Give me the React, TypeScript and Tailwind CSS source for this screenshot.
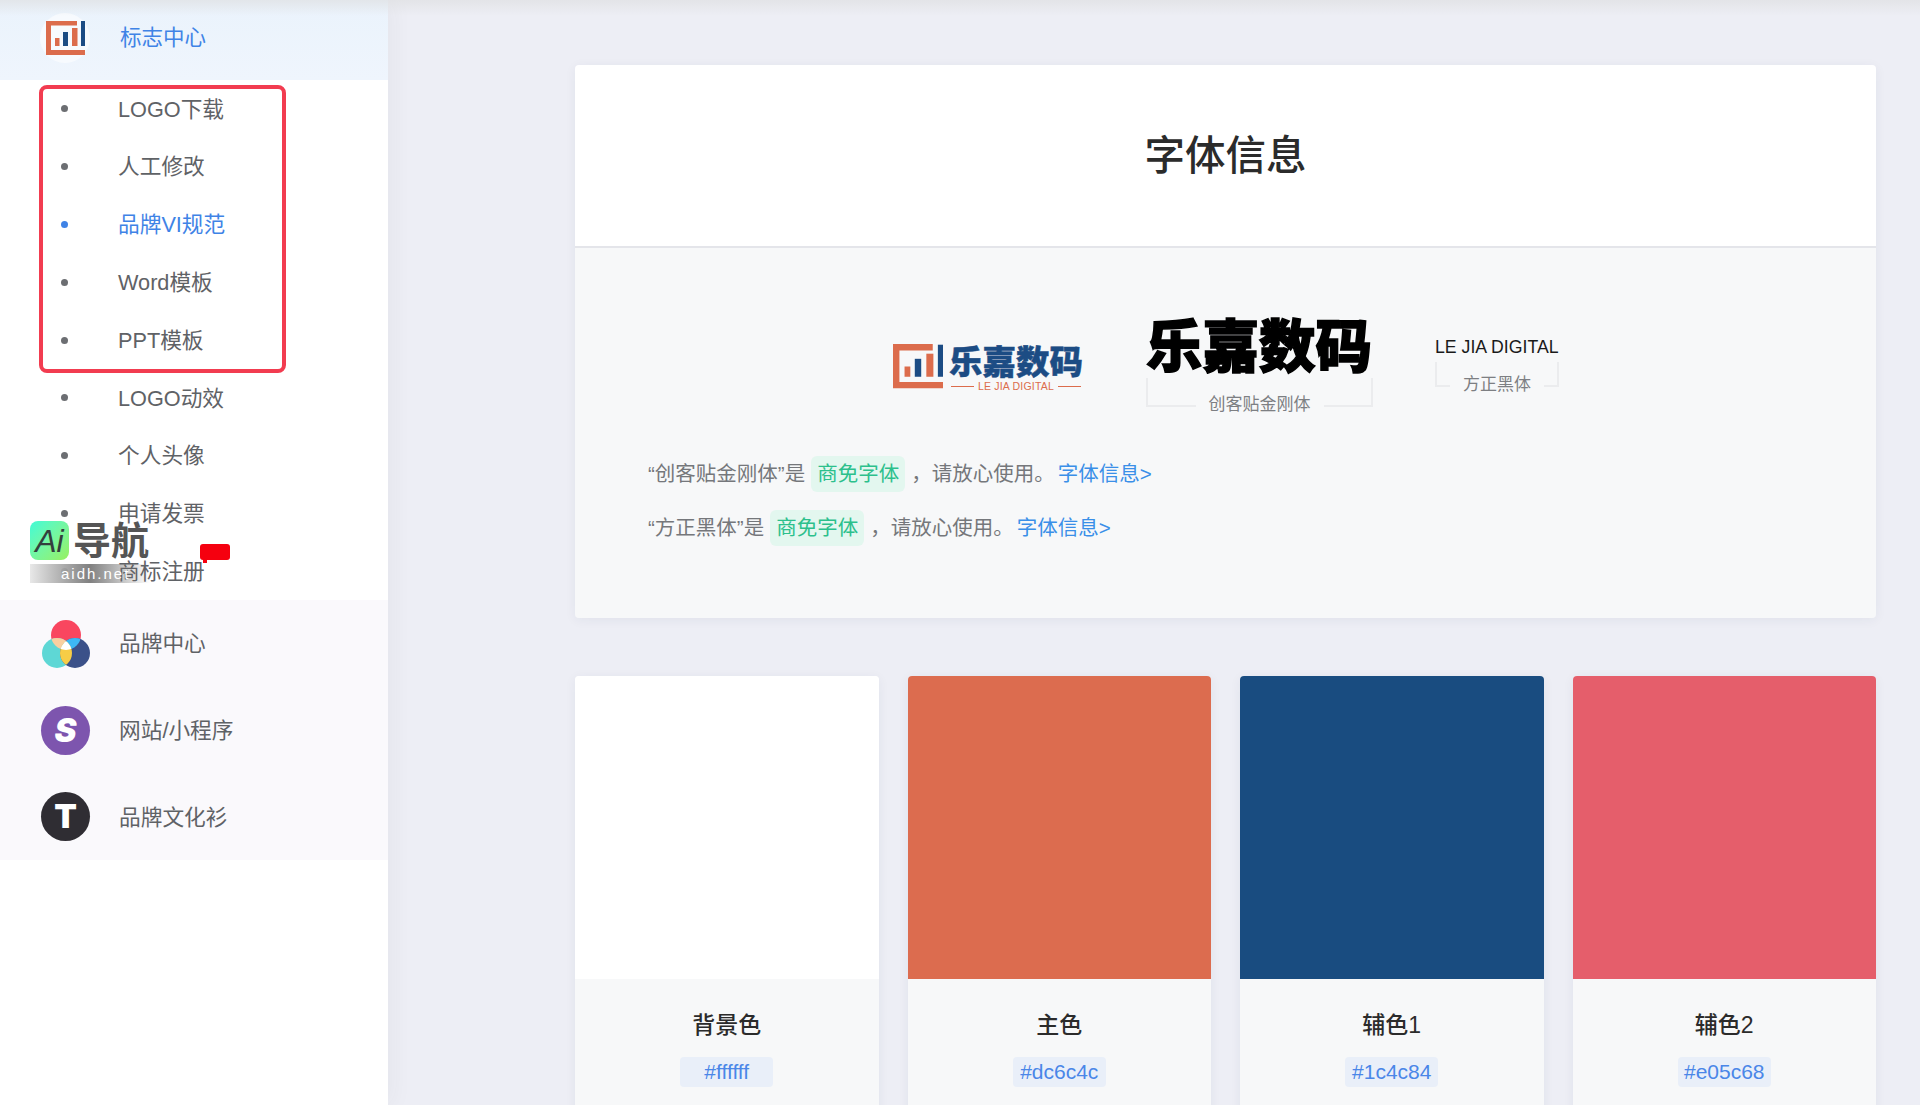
import type { ReactNode } from "react"

const subItems = ["LOGO下载", "人工修改", "品牌VI规范", "Word模板", "PPT模板", "LOGO动效", "个人头像", "申请发票", "商标注册"]

const swatches = [
  { name: "背景色", hex: "#ffffff", swatch: "bg-[#ffffff]" },
  { name: "主色", hex: "#dc6c4c", swatch: "bg-[#dc6c4f]" },
  { name: "辅色1", hex: "#1c4c84", swatch: "bg-[#194c80]" },
  { name: "辅色2", hex: "#e05c68", swatch: "bg-[#e55e6b]" },
]

function LogoMark({ className }: { className: string }) {
  return (
    <svg viewBox="0 0 39 34" className={className}>
      <path d="M31 2H2.500v29.500H39" fill="none" stroke="#dc6c4c" strokeWidth="5" />
      <rect x="9" y="17" width="4.500" height="8" fill="#dc6c4c" />
      <rect x="17" y="11" width="5" height="14" fill="#1c4c84" />
      <rect x="26" y="7" width="5.500" height="18" fill="#dc6c4c" />
      <rect x="35" y="0" width="4" height="25" fill="#1c4c84" />
    </svg>
  )
}

function BrandIcon() {
  return (
    <svg viewBox="0 0 48 48" className="h-[48px] w-[48px]">
      <defs>
        <clipPath id="top"><circle cx="24" cy="15" r="15" /></clipPath>
        <clipPath id="left"><circle cx="15" cy="33" r="15" /></clipPath>
        <clipPath id="right"><circle cx="33" cy="33" r="15" /></clipPath>
      </defs>
      <circle cx="24" cy="15" r="15" fill="#f9465f" />
      <circle cx="15" cy="33" r="15" fill="#5ed7d5" />
      <circle cx="33" cy="33" r="15" fill="#3b5189" />
      <circle cx="15" cy="33" r="15" fill="#f9cfa0" clipPath="url(#top)" />
      <circle cx="33" cy="33" r="15" fill="#3db8f5" clipPath="url(#top)" />
      <circle cx="33" cy="33" r="15" fill="#f7cd46" clipPath="url(#left)" />
      <g clipPath="url(#top)">
        <circle cx="15" cy="33" r="15" fill="#ffffff" clipPath="url(#right)" />
      </g>
    </svg>
  )
}

function GroupRow({ icon, label }: { icon: ReactNode; label: string }) {
  return (
    <div className="flex h-[86.67px] items-center pl-[41px]">
      <div className="flex w-[49px] justify-center">{icon}</div>
      <span className="ml-[29px] pt-[2px] text-[21.700px] text-[#5f6266]">{label}</span>
    </div>
  )
}

function Sidebar() {
  return (
    <aside className="relative z-10 w-[388px] shrink-0 bg-white shadow-[3px_0_22px_rgba(60,60,60,0.05)]">
      <div className="flex h-[80px] items-center bg-gradient-to-b from-[#eaf3fc] to-[#eff5fd] pb-[4px] pl-[46px]">
        <div className="flex h-[50px] w-[50px] -translate-x-[6px] items-center justify-center rounded-full bg-[#f7fafe]">
          <LogoMark className="h-[34px] w-[39px]" />
        </div>
        <span className="ml-[24px] text-[21.500px] text-[#3f83e6]">标志中心</span>
      </div>

      {subItems.map((item) => (
        <div key={item} className={`flex h-[57.8px] items-center pl-[61px] text-[21.700px] ${item === "品牌VI规范" ? "text-[#3f83e6]" : "text-[#5f6266]"}`}>
          <span className={`h-[7px] w-[7px] rounded-full ${item === "品牌VI规范" ? "bg-[#3f83e6]" : "bg-[#6c6e72]"}`} />
          <span className="ml-[50px] pt-[2px]">{item}</span>
        </div>
      ))}

      <div className="bg-[#faf9fc]">
        <GroupRow icon={<BrandIcon />} label="品牌中心" />
        <GroupRow
          icon={
            <div className="flex h-[49px] w-[49px] items-center justify-center rounded-full bg-[#7d55ae] font-['Inter'] text-[33px] font-black italic leading-none text-white">S</div>
          }
          label="网站/小程序"
        />
        <GroupRow
          icon={
            <div className="flex h-[49px] w-[49px] items-center justify-center rounded-full bg-[#2f2d33] font-['Inter'] text-[33px] font-black leading-none text-white">T</div>
          }
          label="品牌文化衫"
        />
      </div>

      {/* red highlight around the first five rows */}
      <div className="absolute left-[39px] top-[85px] h-[288px] w-[247px] rounded-[8px] border-[4px] border-[#f23c50]" />

      {/* site watermark */}
      <div className="absolute left-[30px] top-[521px] h-[39px] w-[39px] rounded-[8px] bg-gradient-to-br from-[#3dfbd6] to-[#97f05c]">
        <span className="flex h-full items-center justify-center font-['Liberation_Sans'] text-[32px] italic leading-none text-[#333f3d]">Ai</span>
      </div>
      <span className="absolute left-[73px] top-[517px] text-[38px] font-bold leading-[48px] text-[#555555]">导航</span>
      <div className="absolute left-[30px] top-[564px] flex h-[19px] w-[120px] items-center bg-gradient-to-r from-[#e8e8e8] via-[#6a6a6a]/85 to-transparent pl-[31px] text-[15px] leading-none tracking-[2px] text-white">
        aidh.net
      </div>
      <div className="absolute left-[200px] top-[544px] h-[16px] w-[30px] rounded-[3px] bg-[#f5000f]" />
      <div className="absolute left-[203px] top-[559px] h-[4px] w-[4px] bg-[#f5000f]" />
    </aside>
  )
}

function Bracket({ label, className }: { label: string; className: string }) {
  return (
    <div className={`relative border-x-2 border-b-2 border-[#ebecee] ${className}`}>
      <span className="absolute left-1/2 top-full -translate-x-1/2 -translate-y-1/2 whitespace-nowrap bg-[#f7f8f9] px-[13px] text-[17px] leading-[24px] text-[#7d7f83]">
        {label}
      </span>
    </div>
  )
}

function FontLine({ font }: { font: string }) {
  return (
    <p className="flex h-[54px] items-center text-[20.500px] text-[#75777b]">
      <span>“{font}”是</span>
      <span className="ml-[6px] rounded-[6px] bg-[#e3f7ef] px-[6px] py-[5px] leading-[26px] text-[#2cc08c]">商免字体</span>
      <span className="ml-[6px]">，请放心使用。</span>
      <span className="ml-[3px] text-[#3a8fe8]">字体信息&gt;</span>
    </p>
  )
}

function FontCard() {
  return (
    <section className="overflow-hidden rounded-[4px] shadow-[0_2px_12px_rgba(40,50,90,0.06)]">
      <div className="flex h-[181px] items-center justify-center bg-white pt-[1px]">
        <h1 className="text-[40.500px] font-medium text-[#2b2b2b]">字体信息</h1>
      </div>
      <div className="h-[372px] border-t-2 border-[#e4e5ea] bg-[#f7f8f9]">
        <div className="flex h-[199px] gap-[62px] pl-[318px] pt-[73px]">
          <div className="mt-[23px] flex w-[191px] items-start">
            <LogoMark className="h-[45px] w-[50px] shrink-0" />
            <div className="ml-[6px] flex flex-col items-center pt-[2px]">
              <span className="whitespace-nowrap text-[33.500px] font-black leading-[33px] text-[#1c4c84] [-webkit-text-stroke:0.5px_#1c4c84]">乐嘉数码</span>
              <div className="mt-[1px] flex items-center gap-[4px]">
                <span className="h-[1px] w-[23px] bg-[#dc6c4c]" />
                <span className="whitespace-nowrap text-[10.500px] leading-[12px] tracking-[0.2px] text-[#dc6c4c]">LE JIA DIGITAL</span>
                <span className="h-[1px] w-[23px] bg-[#dc6c4c]" />
              </div>
            </div>
          </div>
          <div className="w-[227px]">
            <div className="whitespace-nowrap text-[56.500px] font-black leading-[54px] text-black [-webkit-text-stroke:1.5px_black]">乐嘉数码</div>
            <Bracket label="创客贴金刚体" className="mt-[3px] h-[29px]" />
          </div>
          <div className="mt-[14px] w-[124px]">
            <div className="whitespace-nowrap text-[17.700px] leading-[24px] text-[#1a1a1a]">LE JIA DIGITAL</div>
            <Bracket label="方正黑体" className="mt-[3px] h-[25px]" />
          </div>
        </div>
        <div className="pl-[73px]">
          <FontLine font="创客贴金刚体" />
          <FontLine font="方正黑体" />
        </div>
      </div>
    </section>
  )
}

export default function App() {
  return (
    <div className="relative flex h-[1105px] w-[1920px] overflow-hidden bg-[#edeef5] font-['Liberation_Sans','Noto_Sans_CJK_SC',sans-serif]">
      <Sidebar />
      <main className="flex-1 pl-[187px] pr-[44px] pt-[65px]">
        <FontCard />
        <div className="mt-[58px] grid grid-cols-4 gap-[29px]">
          {swatches.map((s) => (
            <div key={s.name} className="overflow-hidden rounded-[4px] bg-[#f7f8f9] shadow-[0_2px_12px_rgba(40,50,90,0.06)]">
              <div className={`h-[303px] ${s.swatch}`} />
              <div className="flex h-[160px] flex-col items-center pt-[30px]">
                <div className="text-[23px] font-medium leading-[32px] text-[#2b2b2b]">{s.name}</div>
                <div className="mt-[16px] w-[93px] rounded-[4px] bg-[#e9eff9] text-center text-[21px] leading-[30px] text-[#4a86e8]">{s.hex}</div>
              </div>
            </div>
          ))}
        </div>
      </main>
      {/* soft shadow under the (cropped) top bar */}
      <div className="absolute inset-x-0 top-0 z-20 h-[16px] bg-gradient-to-b from-[#dfe0e2]/70 to-transparent" />
    </div>
  )
}
